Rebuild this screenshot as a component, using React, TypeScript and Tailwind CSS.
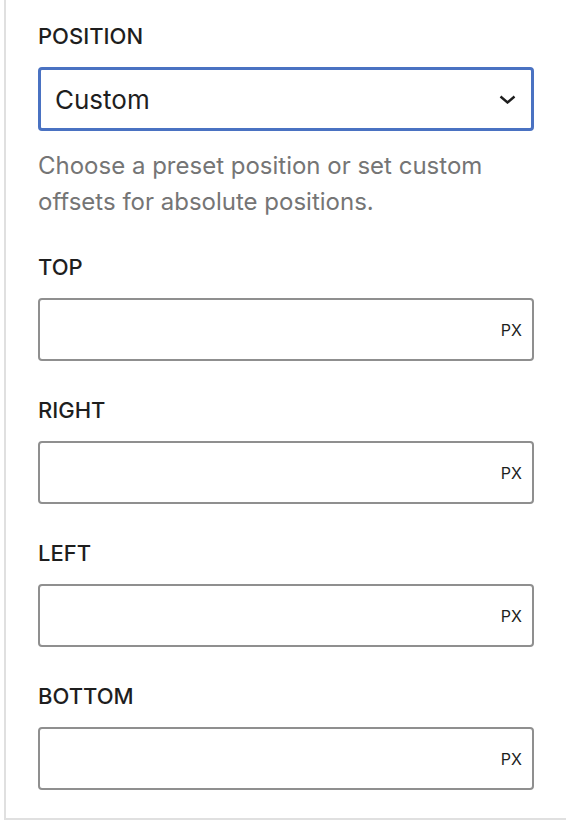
import { useState } from 'react';

const FONT = { fontFamily: 'Inter, "Noto Sans", "Liberation Sans", sans-serif' };

function FieldLabel({ children }: { children: string }) {
  return (
    <div className="mb-[15px] text-[22px] font-medium uppercase leading-[32px] text-[#1e1e1e]">
      {children}
    </div>
  );
}

function UnitInput({ label }: { label: string }) {
  const [value, setValue] = useState('');
  return (
    <div>
      <FieldLabel>{label}</FieldLabel>
      <div className="flex h-[63px] items-center rounded-[4px] border-2 border-[#8f8f8f] bg-white pr-[10px]">
        <input
          className="h-full min-w-0 flex-1 bg-transparent px-4 text-[26px] text-[#1e1e1e] outline-none"
          value={value}
          onChange={(e) => setValue(e.target.value)}
        />
        <span className="text-[16px] leading-none text-[#1e1e1e]">PX</span>
      </div>
    </div>
  );
}

export default function App() {
  return (
    <div className="min-h-screen bg-white" style={FONT}>
      <div className="ml-[4px] border-b-2 border-l-2 border-[#e0e0e0] pb-[28px] pl-[32px] pr-[32px] pt-[20px]">
        <FieldLabel>Position</FieldLabel>
        <div className="flex h-[64px] items-center justify-between rounded-[4px] border-[3px] border-[#4a72c2] bg-white pl-[14px] pr-[15px]">
          <span className="text-[26px] text-[#1e1e1e]">Custom</span>
          <svg width="17" height="9" viewBox="0 0 17 9" fill="none">
            <path d="M1.5 1.5 L8.5 7.5 L15.5 1.5" stroke="#1e1e1e" strokeWidth="2.4" />
          </svg>
        </div>
        <p className="mt-[17px] text-[24px] leading-[36px] text-[#757575]">
          Choose a preset position or set custom offsets for absolute positions.
        </p>
        <div className="mt-[31px] flex flex-col gap-[33px]">
          <UnitInput label="Top" />
          <UnitInput label="Right" />
          <UnitInput label="Left" />
          <UnitInput label="Bottom" />
        </div>
      </div>
    </div>
  );
}
